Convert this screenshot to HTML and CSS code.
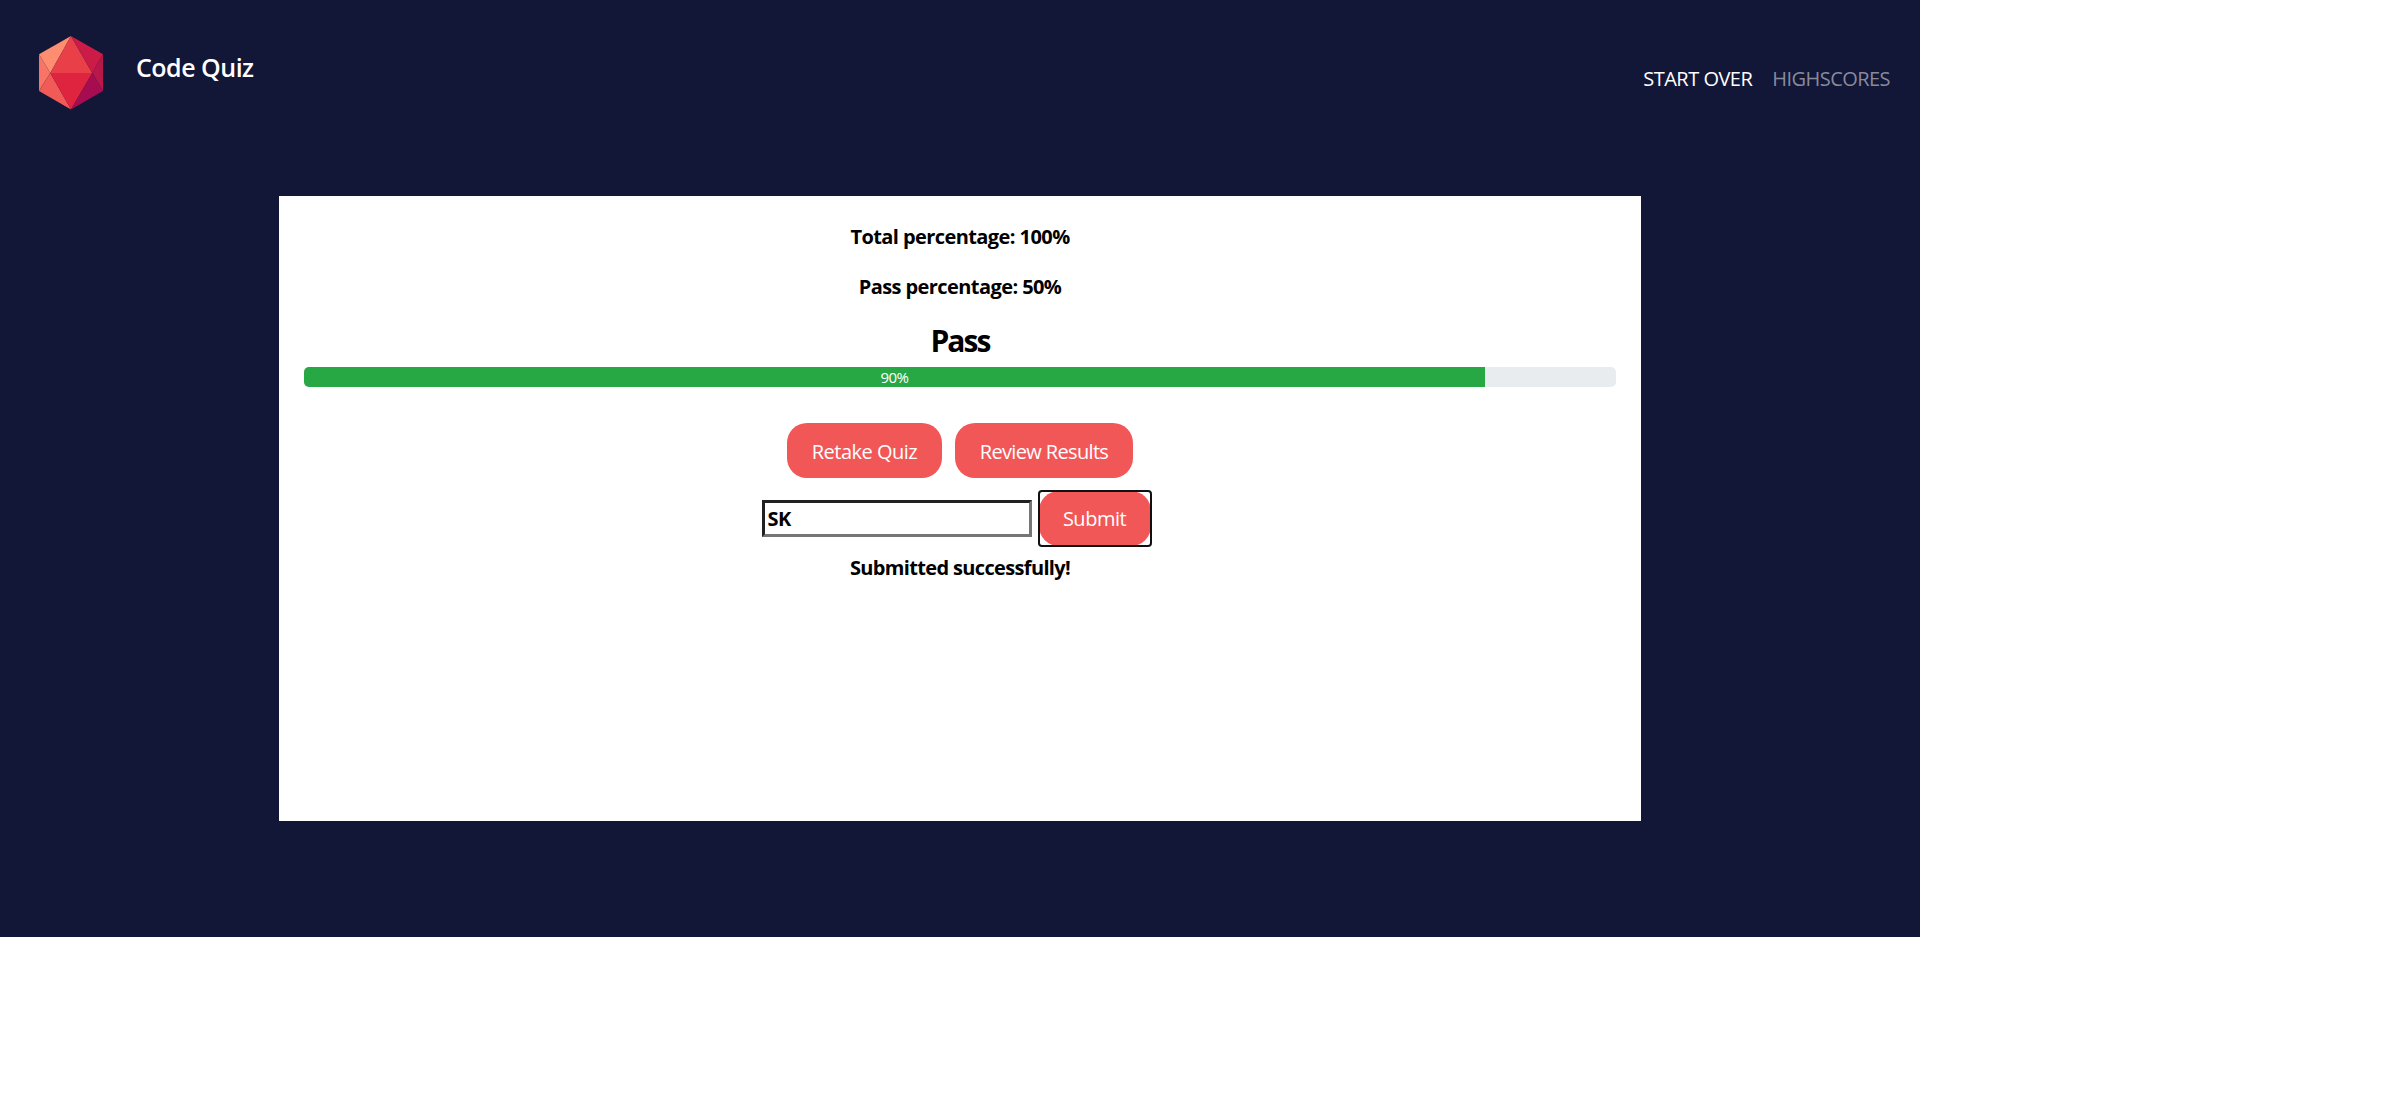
FILE: index.html
```html
<!DOCTYPE html>
<html lang="en">
<head>
<meta charset="utf-8">
<title>Code Quiz</title>
<link rel="stylesheet" href="styles.css">
</head>
<body>
<div class="page">
  <header class="navbar">
    <a class="brand">
      <svg class="logo" viewBox="0 0 64 74" width="64" height="74">
        <path fill="#ff8e71" d="M32 0 0 18.3 11.3 37z"/>
        <path fill="#f87565" d="M0 18.3V55L11.3 37z"/>
        <path fill="#f25a57" d="M0 55 32 73.5 11.3 37z"/>
        <path fill="#e83f49" d="M32 0 11.3 37h42z"/>
        <path fill="#df2440" d="M32 73.5 11.3 37h42z"/>
        <path fill="#cb1b46" d="M32 0 64 18.3 53.3 37z"/>
        <path fill="#b81849" d="M64 18.3V55L53.3 37z"/>
        <path fill="#a60d51" d="M64 55 32 73.5 53.3 37z"/>
      </svg>
      <span class="brand-name">Code Quiz</span>
    </a>
    <nav class="links">
      <a class="link active">START OVER</a>
      <a class="link">HIGHSCORES</a>
    </nav>
  </header>
  <main class="card">
    <p class="stat">Total percentage: 100%</p>
    <p class="stat">Pass percentage: 50%</p>
    <h1 class="verdict">Pass</h1>
    <div class="progress"><div class="bar" style="width: 90%">90%</div></div>
    <div class="actions">
      <button class="btn retake">Retake Quiz</button>
      <button class="btn review">Review Results</button>
    </div>
    <form class="submit-row">
      <input class="initials" type="text" value="SK">
      <span class="focus-ring"><button class="btn submit" type="button">Submit</button></span>
    </form>
    <p class="message">Submitted successfully!</p>
  </main>
</div>
</body>
</html>
```
FILE: styles.css
```css
* { box-sizing: border-box; }
body { margin: 0; background: #fff; color: #000; font: 20px/30px "Open Sans", sans-serif; }
p, h1 { margin: 0; white-space: nowrap; }
.page { width: 1920px; height: 937px; background: #121637; }
.navbar { display: flex; justify-content: space-between; height: 196px; padding: 36px 30px 0 39px; }
.brand { display: flex; align-items: flex-start; gap: 32px; color: #fff; }
.logo { display: block; }
.brand-name { font-size: 25px; line-height: 36px; font-weight: 600; padding: 13px 0 0 1px; letter-spacing: -0.5px; white-space: nowrap; }
.links { display: flex; gap: 20px; padding-top: 28px; letter-spacing: -0.55px; white-space: nowrap; }
.link { color: #888a9b; }
.active { color: #fff; letter-spacing: -0.5px; }
.card { display: flex; flex-direction: column; align-items: center; width: 1362px; height: 625px; margin-left: 279px; padding: 26px 25px 0; background: #fff; }
.stat { font-weight: 700; height: 50px; letter-spacing: -0.58px; }
.verdict { font-size: 30px; line-height: 38px; height: 45px; font-weight: 700; letter-spacing: -1.9px; }
.progress { width: 100%; height: 20px; background: #e9ecef; border-radius: 5px; overflow: hidden; }
.bar { height: 100%; background: #28a745; color: #fff; font-size: 15px; line-height: 20px; letter-spacing: -0.6px; text-align: center; }
.actions { display: flex; gap: 13px; margin-top: 36px; }
.btn { display: block; height: 55px; padding: 2px 0 0; border: 0; border-radius: 20px; background: #f25757; color: #fff; font: 20px/30px "Open Sans", sans-serif; letter-spacing: -0.5px; white-space: nowrap; }
.retake { width: 155px; }
.review { width: 178px; letter-spacing: -0.65px; }
.submit-row { display: flex; align-items: center; gap: 7px; height: 57px; margin-top: 12px; margin-right: 8px; }
.initials { width: 270px; height: 37px; padding: 1px 3px; border: 3px solid; border-color: #212121 #767676 #767676 #212121; background: #fff; color: #000; font: 700 20px/27px "Open Sans", sans-serif; letter-spacing: -0.6px; }
.focus-ring { position: relative; width: 112px; }
.focus-ring::after { content: ""; position: absolute; inset: -1px; border: 2px solid #101010; border-radius: 4px; }
.submit { width: 112px; padding-top: 1px; }
.message { font-weight: 700; margin-top: 6px; letter-spacing: -0.65px; }
```
